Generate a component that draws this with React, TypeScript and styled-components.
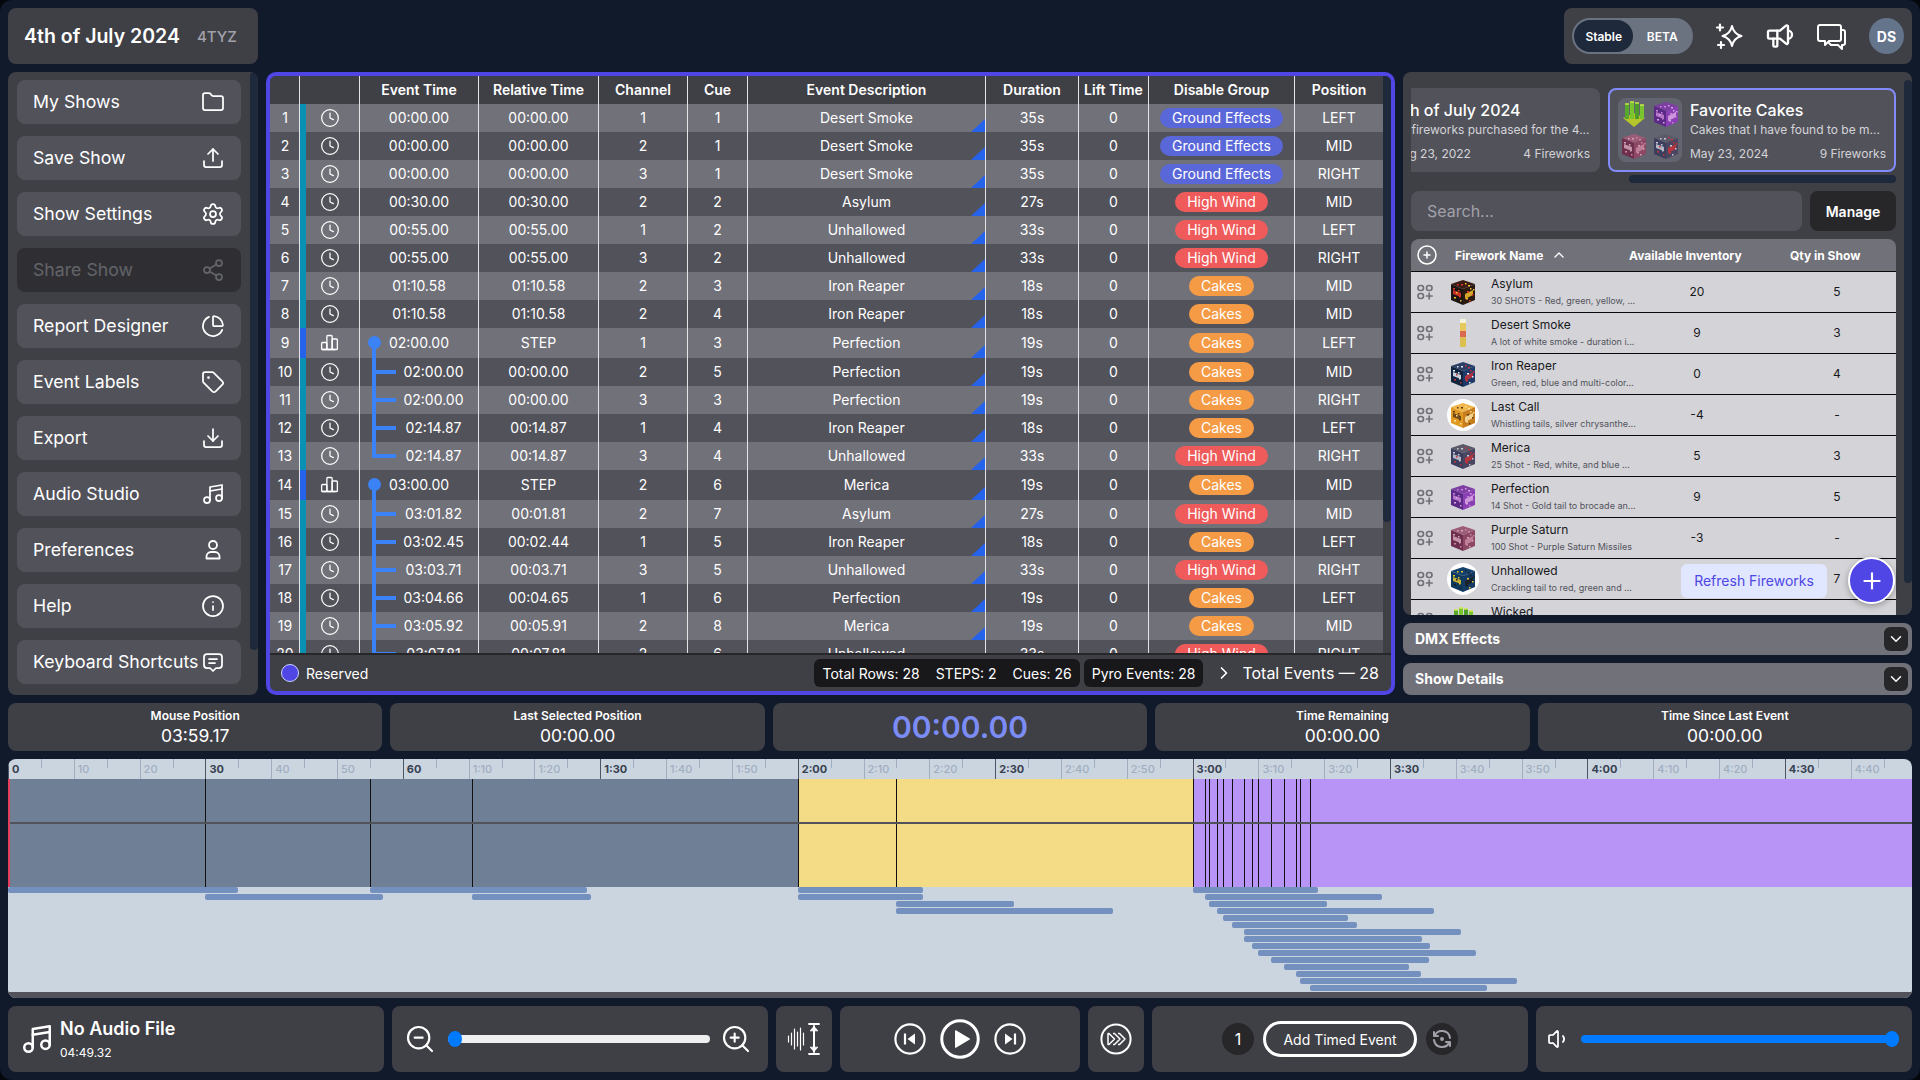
import React from "react";
import styled, { createGlobalStyle } from "styled-components";
import { Clock, Download, Folder, Info, Music4, PieChart, Plus, Settings, Share2, Tag, Upload, Volume1, ZoomIn, ZoomOut } from "lucide-react";
import { TbChartBar, TbChevronDown, TbChevronRight, TbChevronUp, TbCirclePlus, TbMessage2, TbRefreshDot, TbSpeakerphone } from "react-icons/tb";

const GlobalStyle = createGlobalStyle`
  html, body { margin: 0; padding: 0; background: #05070c; overflow: hidden; }
  * { box-sizing: border-box; }
  body { font-family: Inter, "Noto Sans", sans-serif; color: #fff; }
`;

const PX_PER_SEC = 1904 / 289.32;
const COLS = "30px 60px 119px 120px 89px 60px 238px 93px 70px 146px 88px";

/* ---------- shell ---------- */
const Page = styled.div`
  width: 1920px;
  height: 1080px;
  padding: 8px;
  background: #111a2b;
  border-radius: 12px;
  display: grid;
  grid-template-rows: 56px 623px 48px 239px 66px;
  gap: 8px;
`;
const TopBar = styled.div`
  display: flex;
  justify-content: space-between;
`;
const TitleCard = styled.div`
  width: 250px;
  background: #3f3f46;
  border-radius: 8px;
  display: flex;
  align-items: center;
  gap: 17px;
  padding: 0 16px;
  white-space: nowrap;
`;
const ShowName = styled.span`
  font-size: 19.5px;
  font-weight: 600;
`;
const ShowCode = styled.span`
  font-size: 15px;
  font-weight: 500;
  color: #a1a1aa;
`;
const UserCard = styled.div`
  width: 348px;
  background: #3f3f46;
  border-radius: 8px;
  display: flex;
  align-items: center;
  padding: 0 8px;
`;
const Toggle = styled.div`
  width: 121px;
  height: 36px;
  border-radius: 18px;
  background: #6b7280;
  display: flex;
  align-items: center;
  padding: 2px;
  font-size: 12px;
  font-weight: 600;
  margin-right: 14px;
`;
const ToggleOption = styled.span<{ $on?: boolean }>`
  width: ${(p) => (p.$on ? "60px" : "58px")};
  height: 32px;
  border-radius: 16px;
  background: ${(p) => (p.$on ? "#1e293b" : "transparent")};
  display: flex;
  align-items: center;
  justify-content: center;
`;
const TopIcons = styled.div`
  display: flex;
  align-items: center;
  gap: 20px;
  flex: 1;
  padding-left: 7px;
`;
const Avatar = styled.div`
  width: 35px;
  height: 36px;
  border-radius: 50%;
  background: #64748b;
  display: flex;
  align-items: center;
  justify-content: center;
  font-size: 14px;
  font-weight: 700;
`;
const Main = styled.div`
  display: grid;
  grid-template-columns: 250px 1129px 509px;
  gap: 8px;
  min-height: 0;
`;

/* ---------- sidebar ---------- */
const Sidebar = styled.nav`
  display: flex;
  background: #3f3f46;
  border-radius: 8px;
  overflow: hidden;
`;
const SideList = styled.div`
  flex: 1;
  display: flex;
  flex-direction: column;
  gap: 12px;
  padding: 8px 9px;
`;
const SideButton = styled.div<{ $off?: boolean }>`
  height: 44px;
  flex: none;
  border-radius: 8px;
  background: ${(p) => (p.$off ? "#2f2f33" : "#52525b")};
  color: ${(p) => (p.$off ? "#63646a" : "#fff")};
  display: flex;
  align-items: center;
  justify-content: space-between;
  padding: 0 16px 1px;
  font-size: 17.7px;
  white-space: nowrap;
`;
const SideThumb = styled.div`
  width: 8px;
  height: 578px;
  border-radius: 4px;
  background: #1e293b;
`;

/* ---------- event table ---------- */
const TablePanel = styled.section`
  border: 4px solid #4f46e5;
  border-radius: 10px;
  background: #3f3f46;
  overflow: hidden;
  display: flex;
  flex-direction: column;
`;
const TableBody = styled.div`
  height: 577px;
  display: flex;
`;
const TableView = styled.div`
  width: 1113px;
  overflow: hidden;
`;
const TableThumb = styled.div`
  width: 8px;
  height: 446px;
  border-radius: 0 0 4px 4px;
  background: #1e293b;
`;
const HeadRow = styled.div`
  display: grid;
  grid-template-columns: ${COLS};
  height: 28px;
  background: #3f3f46;
  font-size: 14px;
  font-weight: 600;
`;
const DataRow = styled.div<{ $light: boolean; $step: boolean }>`
  display: grid;
  grid-template-columns: ${COLS};
  height: ${(p) => (p.$step ? "30px" : "28px")};
  background: ${(p) => (p.$light ? "#71717a" : "#52525b")};
  font-size: 14px;
`;
const Cell = styled.div`
  display: flex;
  align-items: center;
  justify-content: center;
  padding-bottom: 1px;
  border-right: 1px solid #e4e4e7;
  white-space: nowrap;
  min-width: 0;
`;
const PlainCell = styled(Cell)`
  border-right: none;
`;
const NumCell = styled(Cell)`
  padding-left: 1px;
`;
const TypeCell = styled(Cell)<{ $step: boolean }>`
  border-left: 6px solid ${(p) => (p.$step ? "#2563eb" : "#0891b2")};
  padding-right: 6px;
`;
const TimeCell = styled(Cell)<{ $child: boolean }>`
  position: relative;
  padding-left: ${(p) => (p.$child ? "29px" : "0")};
`;
const DescCell = styled(Cell)`
  position: relative;
  &::after {
    content: "";
    position: absolute;
    right: 0;
    bottom: 0;
    width: 14px;
    height: 13px;
    background: #2563eb;
    clip-path: polygon(100% 0, 100% 100%, 0 100%);
  }
`;
const StepDot = styled.i`
  position: absolute;
  left: 8px;
  top: 8px;
  width: 13px;
  height: 13px;
  border-radius: 50%;
  background: #3b82f6;
  &::after {
    content: "";
    position: absolute;
    left: 4px;
    top: 6px;
    width: 4px;
    height: 18px;
    background: #3b82f6;
  }
`;
const TreeBranch = styled.i<{ $last: boolean }>`
  position: absolute;
  left: 12px;
  top: 0;
  width: 4px;
  height: ${(p) => (p.$last ? "16px" : "100%")};
  background: #3b82f6;
  &::after {
    content: "";
    position: absolute;
    left: 0;
    top: 12px;
    width: 24px;
    height: 4px;
    background: #3b82f6;
  }
`;
const GroupPill = styled.span<{ $color: string }>`
  height: 20px;
  padding: 0 12px 1px;
  border-radius: 10px;
  background: ${(p) => p.$color};
  display: flex;
  align-items: center;
`;
const TableFooter = styled.div`
  flex: 1;
  display: flex;
  align-items: center;
  padding: 0 12px 0 11px;
  border-top: 2px solid #27272a;
  font-size: 14px;
`;
const LegendDot = styled.span`
  width: 18px;
  height: 18px;
  border-radius: 50%;
  background: #4f46e5;
  border: 1px solid #c7d2fe;
  margin-right: 7px;
`;
const Totals = styled.div`
  margin-left: auto;
  display: flex;
  align-items: center;
  gap: 4px;
`;
const TotalPill = styled.div`
  height: 28px;
  padding: 0 8px;
  border-radius: 6px;
  background: #18181b;
  display: flex;
  align-items: center;
  gap: 16px;
`;
const ExpandTotals = styled.span`
  display: flex;
  margin-left: 7px;
`;
const TotalEvents = styled.span`
  font-size: 16px;
  margin-left: 4px;
`;

/* ---------- inventory ---------- */
const RightColumn = styled.div`
  display: flex;
  flex-direction: column;
  gap: 8px;
  min-height: 0;
`;
const Inventory = styled.section`
  position: relative;
  flex: 1;
  min-height: 0;
  background: #3f3f46;
  border-radius: 8px;
  overflow: hidden;
  padding: 16px 16px 0 8px;
  display: flex;
  flex-direction: column;
`;
const InvScroll = styled.div`
  position: absolute;
  top: 8px;
  right: 0;
  width: 8px;
  height: 503px;
  border-radius: 4px;
  background: #1e293b;
`;
const Carousel = styled.div`
  display: flex;
  justify-content: flex-end;
  gap: 8px;
  height: 84px;
  flex: none;
  overflow: hidden;
`;
const ListCard = styled.div<{ $active?: boolean }>`
  flex: none;
  width: 288px;
  height: 84px;
  padding: 8px;
  border-radius: 8px;
  border: 2px solid ${(p) => (p.$active ? "#818cf8" : "#52525b")};
  background: #52525b;
  display: grid;
  grid-template-columns: 64px 1fr;
  gap: 8px;
`;
const ArtGrid = styled.div`
  display: grid;
  grid-template-columns: 32px 32px;
  border-radius: 8px;
  background: #62656f;
`;
const CardText = styled.div`
  min-width: 0;
  padding-top: 2px;
  display: flex;
  flex-direction: column;
`;
const CardTitle = styled.div`
  font-size: 16px;
  font-weight: 500;
  line-height: 20px;
`;
const CardDesc = styled.div`
  font-size: 12px;
  line-height: 16px;
  margin-top: 2px;
  color: #d4d4d8;
  white-space: nowrap;
`;
const CardMeta = styled.div`
  font-size: 12px;
  line-height: 16px;
  margin-top: 8px;
  color: #d4d4d8;
  display: flex;
  justify-content: space-between;
`;
const HScroll = styled.div`
  flex: none;
  height: 8px;
  margin: 3px 0 8px 218px;
  border-radius: 4px;
  background: #1e293b;
`;
const SearchRow = styled.div`
  display: flex;
  gap: 8px;
  flex: none;
  height: 40px;
  margin-bottom: 8px;
`;
const SearchInput = styled.input`
  flex: 1;
  min-width: 0;
  height: 40px;
  border: none;
  outline: none;
  border-radius: 8px;
  background: #52525b;
  padding: 0 16px;
  font: 400 16px Inter, sans-serif;
  color: #fff;
  &::placeholder {
    color: #a1a1aa;
    opacity: 1;
  }
`;
const ManageButton = styled.div`
  width: 86px;
  border-radius: 8px;
  background: #27272a;
  display: flex;
  align-items: center;
  justify-content: center;
  font-size: 14px;
  font-weight: 600;
`;
const FireworkHead = styled.div`
  flex: none;
  height: 32px;
  background: #71717a;
  border-radius: 8px 8px 0 0;
  display: grid;
  grid-template-columns: 44px 174px 161px 1fr;
  align-items: center;
  font-size: 12px;
  font-weight: 700;
`;
const HeadAdd = styled.div`
  padding-left: 4px;
  display: flex;
`;
const HeadName = styled.div`
  display: flex;
  align-items: center;
  gap: 8px;
`;
const FireworkRow = styled.div`
  flex: none;
  height: 41px;
  background: #d4d4d8;
  border-top: 1px solid #09090b;
  color: #18181b;
  display: grid;
  grid-template-columns: 36px 44px 166px 80px 1fr;
  align-items: center;
`;
const DragCol = styled.div`
  padding-left: 6px;
  display: flex;
`;
const ThumbBox = styled.div<{ $round?: boolean }>`
  width: 32px;
  height: 32px;
  border-radius: 50%;
  background: ${(p) => (p.$round ? "#fff" : "transparent")};
`;
const NameBox = styled.div`
  min-width: 0;
  padding-bottom: 2px;
`;
const FireworkName = styled.div`
  font-size: 12px;
  line-height: 16px;
`;
const FireworkDesc = styled.div`
  font-size: 9px;
  line-height: 12px;
  min-height: 12px;
  margin-top: 3px;
  color: #52525b;
  white-space: nowrap;
`;
const Avail = styled.div`
  font-size: 12px;
  text-align: center;
  padding-bottom: 1px;
`;
const Qty = styled(Avail)`
  padding-left: 41px;
`;
const Floating = styled.div`
  position: absolute;
  right: 17px;
  bottom: 11px;
  display: flex;
  align-items: center;
  gap: 21px;
`;
const RefreshButton = styled.div`
  width: 146px;
  height: 34px;
  border-radius: 6px;
  background: #e0e7ff;
  color: #4f46e5;
  font-size: 14px;
  display: flex;
  align-items: center;
  justify-content: center;
`;
const Fab = styled.div`
  width: 47px;
  height: 47px;
  border-radius: 50%;
  background: #4f46e5;
  border: 2px solid #fff;
  box-shadow: 0 2px 6px rgba(0, 0, 0, 0.3);
  display: flex;
  align-items: center;
  justify-content: center;
`;
const Accordion = styled.div`
  flex: none;
  height: 32px;
  border-radius: 8px;
  background: #71717a;
  padding: 0 4px 1px 12px;
  display: flex;
  align-items: center;
  justify-content: space-between;
  font-size: 14px;
  font-weight: 700;
`;
const AccordionToggle = styled.span`
  width: 24px;
  height: 24px;
  border-radius: 6px;
  background: #27272a;
  display: flex;
  align-items: center;
  justify-content: center;
`;

/* ---------- stats ---------- */
const StatRow = styled.div`
  display: grid;
  grid-template-columns: repeat(5, 1fr);
  gap: 8px;
`;
const StatCard = styled.div`
  background: #3f3f46;
  border-radius: 8px;
  display: flex;
  flex-direction: column;
  align-items: center;
  justify-content: center;
`;
const StatLabel = styled.div`
  font-size: 12px;
  font-weight: 600;
  line-height: 16px;
`;
const StatValue = styled.div`
  font-size: 17.500px;
  line-height: 22px;
  margin-top: 1px;
`;
const ClockValue = styled.div`
  font-size: 30px;
  font-weight: 600;
  color: #7c8cf5;
`;

/* ---------- timeline ---------- */
const Timeline = styled.section`
  border-radius: 8px;
  overflow: hidden;
  display: flex;
  flex-direction: column;
  background: #cbd5e0;
`;
const Ruler = styled.div`
  position: relative;
  height: 20px;
  flex: none;
`;
const Tick = styled.div<{ $major: boolean; $short: boolean }>`
  position: absolute;
  top: 0;
  height: ${(p) => (p.$short ? "9px" : "20px")};
  border-left: 1px solid ${(p) => (p.$major ? "#4b5563" : "#a0aec0")};
  padding: 3px 0 0 3px;
  font-size: 11px;
  line-height: 14px;
  font-weight: ${(p) => (p.$major ? 700 : 500)};
  color: ${(p) => (p.$major ? "#374151" : "#a0aec0")};
  white-space: nowrap;
`;
const Wave = styled.div`
  position: relative;
  height: 108px;
  flex: none;
`;
const Segment = styled.div<{ $color: string }>`
  position: absolute;
  top: 0;
  bottom: 0;
  background: ${(p) => p.$color};
`;
const MidLine = styled.div`
  position: absolute;
  left: 0;
  right: 0;
  top: 43px;
  height: 2px;
  background: #52525b;
`;
const EventLine = styled.div`
  position: absolute;
  top: 0;
  bottom: 0;
  width: 1px;
  background: #111;
`;
const Playhead = styled.div`
  position: absolute;
  top: 0;
  bottom: 0;
  left: 0;
  width: 2px;
  background: #e53e5c;
`;
const Tracks = styled.div`
  position: relative;
  flex: 1;
`;
const TrackBar = styled.div`
  position: absolute;
  height: 6px;
  border-radius: 2px;
  background: #7490bf;
`;
const TimelineScroll = styled.div`
  flex: none;
  height: 6px;
  background: #52525b;
`;

/* ---------- bottom controls ---------- */
const Controls = styled.div`
  display: grid;
  grid-template-columns: 376px 376px 56px 240px 56px 376px 376px;
  gap: 8px;
`;
const Panel = styled.div`
  background: #3f3f46;
  border-radius: 8px;
  display: flex;
  align-items: center;
`;
const AudioPanel = styled(Panel)`
  padding-left: 12px;
  gap: 6px;
`;
const AudioName = styled.div`
  font-size: 18px;
  font-weight: 600;
  line-height: 22px;
`;
const AudioTime = styled.div`
  font-size: 12px;
  line-height: 16px;
  margin-top: 5px;
`;
const ZoomPanel = styled(Panel)`
  padding: 0 16px 0 12px;
`;
const SliderTrack = styled.div<{ $fill: string }>`
  position: relative;
  flex: 1;
  height: 8px;
  border-radius: 4px;
  background: ${(p) => p.$fill};
`;
const SliderThumb = styled.span<{ $end?: boolean }>`
  position: absolute;
  top: -4px;
  ${(p) => (p.$end ? "right: 0;" : "left: 0;")}
  width: 14px;
  height: 16px;
  border-radius: 50%;
  background: #007bff;
`;
const ZoomTrackWrap = styled.div`
  flex: 1;
  display: flex;
  margin: 0 10px 0 12px;
`;
const CenterPanel = styled(Panel)`
  justify-content: center;
`;
const TransportPanel = styled(CenterPanel)`
  gap: 14px;
`;
const AddPanel = styled(CenterPanel)`
  gap: 9px;
`;
const RoundBadge = styled.div`
  width: 32px;
  height: 32px;
  border-radius: 50%;
  background: #27272a;
  display: flex;
  align-items: center;
  justify-content: center;
  font-size: 16px;
`;
const AddButton = styled.div`
  width: 154px;
  height: 36px;
  border: 3px solid #fff;
  border-radius: 18px;
  display: flex;
  align-items: center;
  justify-content: center;
  font-size: 14px;
`;
const VolumePanel = styled(Panel)`
  padding: 0 13px 0 11px;
  gap: 10px;
`;

/* ---------- drawings ---------- */
const DragIcon = () => (
  <svg width="16" height="16" viewBox="0 0 16 16" fill="none" stroke="#71717a" strokeWidth="1.7" strokeLinecap="round">
    <rect x="1" y="1.5" width="5.5" height="5" rx="2.4" />
    <rect x="9.5" y="1.5" width="5.5" height="5" rx="2.4" />
    <rect x="1" y="9.5" width="5.5" height="5" rx="2.4" />
    <path d="M12.2 9.2v5.6M9.500 12h5.600" />
  </svg>
);

const SparkIcon = () => (
  <svg width="30" height="30" viewBox="0 0 30 30" fill="none" stroke="#fff" strokeWidth="2" strokeLinejoin="round">
    <path d="M18 5c1.200 5.500 4 8.600 9.500 10-5.500 1.400-8.300 4.500-9.500 10-1.200-5.500-4-8.600-9.500-10 5.500-1.400 8.300-4.500 9.500-10z" />
    <path d="M6 3.500v6M3 6.500h6M7 21v6M4 24h6" strokeWidth="2.200" strokeLinecap="round" />
  </svg>
);

const ChatIcon = () => (
  <svg width="30" height="30" viewBox="0 0 30 30" fill="none" stroke="#fff" strokeWidth="2" strokeLinejoin="round" strokeLinecap="round">
    <path d="M4 4h19a2 2 0 0 1 2 2v12a2 2 0 0 1-2 2H13l-4 4v-4H4a2 2 0 0 1-2-2V6a2 2 0 0 1 2-2z" />
    <path d="M25 9h2a2 2 0 0 1 2 2v11a2 2 0 0 1-2 2h-1v4l-4-4h-7l-2-2" />
  </svg>
);

const PersonIcon = () => (
  <svg width="24" height="24" viewBox="0 0 24 24" fill="none" stroke="#fff" strokeWidth="1.8" strokeLinejoin="round">
    <circle cx="12" cy="7" r="4" />
    <path d="M5.500 20.500v-2a4.500 4.500 0 0 1 4.500-4.500h4a4.500 4.500 0 0 1 4.500 4.500v2z" />
  </svg>
);

const WaveIcon = () => (
  <svg width="34" height="34" viewBox="0 0 34 34" fill="none" stroke="#fff" strokeLinecap="round">
    <path d="M1.500 14v6M4.500 11v12M7.500 7v20M10.500 10v14M13.500 6v22M16.500 11v12" strokeWidth="1.200" />
    <path d="M22 2h10M22 32h10" strokeWidth="1.800" />
    <path d="M27 4v26" strokeWidth="2" />
    <path d="M23.500 8.500 27 4.500l3.500 4zM23.500 25.500 27 29.500l3.500-4z" fill="#fff" strokeWidth="1" />
  </svg>
);

const TransportIcon = ({ size, kind }: { size: number; kind: "back" | "play" | "next" }) => (
  <svg width={size} height={size} viewBox="0 0 32 32" fill="none" stroke="#fff" strokeWidth={kind === "play" ? 2.4 : 2.2}>
    <circle cx="16" cy="16" r="14.600" />
    {kind === "play" && <polygon points="12.500,9.500 23.500,16 12.500,22.500" fill="#fff" stroke="#fff" strokeWidth="1" strokeLinejoin="round" />}
    {kind === "back" && (
      <>
        <path d="M11 10.500v11" />
        <polygon points="21,10.500 21,21.500 13.500,16" fill="#fff" stroke="none" />
      </>
    )}
    {kind === "next" && (
      <>
        <path d="M21 10.500v11" />
        <polygon points="11,10.500 11,21.500 18.500,16" fill="#fff" stroke="none" />
      </>
    )}
  </svg>
);

const SpeedIcon = () => (
  <svg width="32" height="32" viewBox="0 0 32 32" fill="none" stroke="#fff" strokeWidth="2">
    <circle cx="16" cy="16" r="14.600" />
    <path d="M8 10.500v11h1l5.500-5.500L9 10.500zM13 10.500h1.500L20 16l-5.500 5.500H13M18 10.500h1.500L25 16l-5.500 5.500H18" strokeWidth="1.500" strokeLinejoin="round" />
  </svg>
);

type BoxColors = { top: string; left: string; right: string; a: string; b: string };

// flecks that break up the flat faces, the reference thumbs are small product photos
const FLECKS = [
  [6, 12], [9, 16], [12, 20], [7, 21], [11, 14], [13, 24], [20, 15], [23, 12], [25, 18], [19, 22], [22, 24], [26, 13], [14, 8], [18, 7], [10, 8], [21, 9],
];

const BoxArt = ({ top, left, right, a, b }: BoxColors) => (
  <svg width="32" height="32" viewBox="0 0 32 32">
    <polygon points="16,4 28,8 16,13 4,8" fill={top} />
    <polygon points="4,8 16,13 16,29 4,24" fill={left} />
    <polygon points="16,13 28,8 28,24 16,29" fill={right} />
    <polygon points="6,14 14,17 14,21 6,18" fill={a} opacity="0.85" />
    <polygon points="18,18 26,14 26,19 18,23" fill={b} opacity="0.85" />
    {FLECKS.map(([x, y], i) => (
      <rect key={i} x={x} y={y} width={i % 3 === 0 ? 2 : 1.5} height="1.500" fill={i % 2 === 0 ? a : b} />
    ))}
  </svg>
);

const TubeArt = () => (
  <svg width="32" height="32" viewBox="0 0 32 32">
    <rect x="13" y="2" width="6" height="4" rx="1" fill="#f5f5dc" />
    <rect x="13" y="6" width="6" height="8" fill="#e8c85a" />
    <rect x="13" y="14" width="6" height="6" fill="#d9694f" />
    <rect x="13" y="20" width="6" height="10" rx="1" fill="#dcc04f" />
  </svg>
);

const GreenArt = () => (
  <svg width="32" height="32" viewBox="0 0 32 32">
    <polygon points="5,20 16,15 27,20 16,29" fill="#b5c52a" />
    <rect x="7" y="6" width="4" height="15" fill="#57a82b" />
    <rect x="12" y="4" width="4" height="17" fill="#7ac52e" />
    <rect x="17" y="5" width="4" height="16" fill="#4d9c2a" />
    <rect x="22" y="7" width="4" height="14" fill="#7ac52e" />
    <path d="M7 6h4M12 4h4M17 5h4M22 7h4" stroke="#c9e84a" strokeWidth="1.500" />
  </svg>
);

const ART: Record<string, BoxColors> = {
  asylum: { top: "#3a1c14", left: "#1d1512", right: "#2a1a12", a: "#e8362a", b: "#f2c12e" },
  iron: { top: "#2c3e66", left: "#12253f", right: "#1d3a6b", a: "#e9eef5", b: "#c8333a" },
  lastCall: { top: "#f0b64a", left: "#e39a22", right: "#c77d1b", a: "#5b3a17", b: "#f7e2a4" },
  merica: { top: "#5c5a6a", left: "#3b3f5d", right: "#4a4560", a: "#c9c9d6", b: "#c8333a" },
  perfection: { top: "#7d3fa3", left: "#5a2a86", right: "#8a3fb4", a: "#c884d6", b: "#d9a6e2" },
  saturn: { top: "#9d5d78", left: "#6e2f4e", right: "#8d4865", a: "#d3a7b8", b: "#c98aa2" },
  unhallowed: { top: "#14406e", left: "#0e3a5e", right: "#123a63", a: "#e8c52c", b: "#1d1d1d" },
};

const Art = ({ name }: { name: string }) => {
  if (name === "tube") return <TubeArt />;
  if (name === "green") return <GreenArt />;
  return <BoxArt {...ART[name]} />;
};

/* ---------- data ---------- */
const NAV = [
  { label: "My Shows", icon: <Folder size={24} strokeWidth={1.75} /> },
  { label: "Save Show", icon: <Upload size={24} strokeWidth={1.75} /> },
  { label: "Show Settings", icon: <Settings size={24} strokeWidth={1.75} /> },
  { label: "Share Show", icon: <Share2 size={24} strokeWidth={1.75} />, off: true },
  { label: "Report Designer", icon: <PieChart size={24} strokeWidth={1.75} /> },
  { label: "Event Labels", icon: <Tag size={24} strokeWidth={1.75} /> },
  { label: "Export", icon: <Download size={24} strokeWidth={1.75} /> },
  { label: "Audio Studio", icon: <Music4 size={24} strokeWidth={1.75} /> },
  { label: "Preferences", icon: <PersonIcon /> },
  { label: "Help", icon: <Info size={24} strokeWidth={1.75} /> },
  { label: "Keyboard Shortcuts", icon: <TbMessage2 size={24} strokeWidth={1.75} /> },
];

const GROUP_COLOR: Record<string, string> = {
  "Ground Effects": "#5a67d8",
  "High Wind": "#ef5b5b",
  Cakes: "#f59b45",
};

type Tree = "none" | "step" | "child" | "last";
type EventRow = [string, string, number, number, string, string, string, string, Tree];

const EVENTS: EventRow[] = [
  ["00:00.00", "00:00.00", 1, 1, "Desert Smoke", "35s", "Ground Effects", "LEFT", "none"],
  ["00:00.00", "00:00.00", 2, 1, "Desert Smoke", "35s", "Ground Effects", "MID", "none"],
  ["00:00.00", "00:00.00", 3, 1, "Desert Smoke", "35s", "Ground Effects", "RIGHT", "none"],
  ["00:30.00", "00:30.00", 2, 2, "Asylum", "27s", "High Wind", "MID", "none"],
  ["00:55.00", "00:55.00", 1, 2, "Unhallowed", "33s", "High Wind", "LEFT", "none"],
  ["00:55.00", "00:55.00", 3, 2, "Unhallowed", "33s", "High Wind", "RIGHT", "none"],
  ["01:10.58", "01:10.58", 2, 3, "Iron Reaper", "18s", "Cakes", "MID", "none"],
  ["01:10.58", "01:10.58", 2, 4, "Iron Reaper", "18s", "Cakes", "MID", "none"],
  ["02:00.00", "STEP", 1, 3, "Perfection", "19s", "Cakes", "LEFT", "step"],
  ["02:00.00", "00:00.00", 2, 5, "Perfection", "19s", "Cakes", "MID", "child"],
  ["02:00.00", "00:00.00", 3, 3, "Perfection", "19s", "Cakes", "RIGHT", "child"],
  ["02:14.87", "00:14.87", 1, 4, "Iron Reaper", "18s", "Cakes", "LEFT", "child"],
  ["02:14.87", "00:14.87", 3, 4, "Unhallowed", "33s", "High Wind", "RIGHT", "last"],
  ["03:00.00", "STEP", 2, 6, "Merica", "19s", "Cakes", "MID", "step"],
  ["03:01.82", "00:01.81", 2, 7, "Asylum", "27s", "High Wind", "MID", "child"],
  ["03:02.45", "00:02.44", 1, 5, "Iron Reaper", "18s", "Cakes", "LEFT", "child"],
  ["03:03.71", "00:03.71", 3, 5, "Unhallowed", "33s", "High Wind", "RIGHT", "child"],
  ["03:04.66", "00:04.65", 1, 6, "Perfection", "19s", "Cakes", "LEFT", "child"],
  ["03:05.92", "00:05.91", 2, 8, "Merica", "19s", "Cakes", "MID", "child"],
  ["03:07.81", "00:07.81", 2, 6, "Unhallowed", "33s", "High Wind", "RIGHT", "child"],
];

const FIREWORKS = [
  { name: "Asylum", desc: "30 SHOTS - Red, green, yellow, ...", avail: "20", qty: "5", art: "asylum" },
  { name: "Desert Smoke", desc: "A lot of white smoke - duration i...", avail: "9", qty: "3", art: "tube" },
  { name: "Iron Reaper", desc: "Green, red, blue and multi-color...", avail: "0", qty: "4", art: "iron" },
  { name: "Last Call", desc: "Whistling tails, silver chrysanthe...", avail: "-4", qty: "-", art: "lastCall", round: true },
  { name: "Merica", desc: "25 Shot - Red, white, and blue ...", avail: "5", qty: "3", art: "merica" },
  { name: "Perfection", desc: "14 Shot - Gold tail to brocade an...", avail: "9", qty: "5", art: "perfection" },
  { name: "Purple Saturn", desc: "100 Shot - Purple Saturn Missiles", avail: "-3", qty: "-", art: "saturn" },
  { name: "Unhallowed", desc: "Crackling tail to red, green and ...", avail: "", qty: "7", art: "unhallowed", round: true },
  { name: "Wicked", desc: "", avail: "", qty: "", art: "green" },
];

const STATS = [
  ["Mouse Position", "03:59.17"],
  ["Last Selected Position", "00:00.00"],
  null,
  ["Time Remaining", "00:00.00"],
  ["Time Since Last Event", "00:00.00"],
];

// [start seconds, duration, lane]
const BARS: [number, number, number][] = [
  [0, 35, 0], [30, 27, 1], [55, 33, 0], [70.58, 18, 1], [120, 19, 0], [120, 19, 1], [134.87, 18, 2], [134.87, 33, 3],
  [180, 19, 0], [181.82, 27, 1], [182.45, 18, 2], [183.71, 33, 3], [184.66, 19, 4], [185.92, 19, 5], [187.81, 33, 6],
  [187.81, 27, 7], [189.1, 27, 8], [190, 33, 9], [191.9, 24, 10], [193.9, 19, 11], [195.7, 19, 12], [196.3, 33, 13], [197.8, 27, 14],
];

const LINE_TIMES = Array.from(new Set(BARS.map((b) => b[0])));

const SEGMENTS = [
  { from: 0, to: 120, color: "#6f7f96" },
  { from: 120, to: 180, color: "#f4dc87" },
  { from: 180, to: 289.32, color: "#b794f6" },
];

const tickLabel = (s: number) => {
  if (s <= 60) return String(s);
  const m = Math.floor(s / 60);
  const r = s % 60;
  return `${m}:${r < 10 ? "0" : ""}${r}`;
};
const TICKS = Array.from({ length: 58 }, (_, i) => i * 5);

const ShowCard = ({ title, desc, date, count, arts, active }: { title: string; desc: string; date: string; count: string; arts: string[]; active?: boolean }) => (
  <ListCard $active={active}>
    <ArtGrid>
      {arts.map((a, i) => (
        <Art key={i} name={a} />
      ))}
    </ArtGrid>
    <CardText>
      <CardTitle>{title}</CardTitle>
      <CardDesc>{desc}</CardDesc>
      <CardMeta>
        <span>{date}</span>
        <span>{count}</span>
      </CardMeta>
    </CardText>
  </ListCard>
);

export default function App() {
  return (
    <Page>
      <GlobalStyle />
      <TopBar>
        <TitleCard>
          <ShowName>4th of July 2024</ShowName>
          <ShowCode>4TYZ</ShowCode>
        </TitleCard>
        <UserCard>
          <Toggle>
            <ToggleOption $on>Stable</ToggleOption>
            <ToggleOption>BETA</ToggleOption>
          </Toggle>
          <TopIcons>
            <SparkIcon />
            <TbSpeakerphone size={32} strokeWidth={1.75} />
            <ChatIcon />
          </TopIcons>
          <Avatar>DS</Avatar>
        </UserCard>
      </TopBar>

      <Main>
        <Sidebar>
          <SideList>
            {NAV.map((n) => (
              <SideButton key={n.label} $off={n.off}>
                {n.label}
                {n.icon}
              </SideButton>
            ))}
          </SideList>
          <SideThumb />
        </Sidebar>

        <TablePanel>
          <TableBody>
            <TableView>
              <HeadRow>
                <Cell />
                <Cell />
                <Cell>Event Time</Cell>
                <Cell>Relative Time</Cell>
                <Cell>Channel</Cell>
                <Cell>Cue</Cell>
                <Cell>Event Description</Cell>
                <Cell>Duration</Cell>
                <Cell>Lift Time</Cell>
                <Cell>Disable Group</Cell>
                <PlainCell>Position</PlainCell>
              </HeadRow>
              {EVENTS.map((e, i) => {
                const tree = e[8];
                const step = tree === "step";
                const child = tree === "child" || tree === "last";
                return (
                  <DataRow key={i} $light={i % 2 === 0} $step={step}>
                    <NumCell>{i + 1}</NumCell>
                    <TypeCell $step={step}>{step ? <TbChartBar size={21} strokeWidth={1.5} /> : <Clock size={20} strokeWidth={1.5} />}</TypeCell>
                    <TimeCell $child={child}>
                      {step && <StepDot />}
                      {child && <TreeBranch $last={tree === "last"} />}
                      {e[0]}
                    </TimeCell>
                    <Cell>{e[1]}</Cell>
                    <Cell>{e[2]}</Cell>
                    <Cell>{e[3]}</Cell>
                    <DescCell>{e[4]}</DescCell>
                    <Cell>{e[5]}</Cell>
                    <Cell>0</Cell>
                    <Cell>
                      <GroupPill $color={GROUP_COLOR[e[6]]}>{e[6]}</GroupPill>
                    </Cell>
                    <PlainCell>{e[7]}</PlainCell>
                  </DataRow>
                );
              })}
            </TableView>
            <TableThumb />
          </TableBody>
          <TableFooter>
            <LegendDot />
            Reserved
            <Totals>
              <TotalPill>
                <span>Total Rows: 28</span>
                <span>STEPS: 2</span>
                <span>Cues: 26</span>
              </TotalPill>
              <TotalPill>Pyro Events: 28</TotalPill>
              <ExpandTotals>
                <TbChevronRight size={20} />
              </ExpandTotals>
              <TotalEvents>Total Events — 28</TotalEvents>
            </Totals>
          </TableFooter>
        </TablePanel>

        <RightColumn>
          <Inventory>
            <Carousel>
              <ShowCard title="4th of July 2024" desc="All fireworks purchased for the 4..." date="Aug 23, 2022" count="4 Fireworks" arts={["perfection", "iron", "merica", "asylum"]} />
              <ShowCard active title="Favorite Cakes" desc="Cakes that I have found to be m..." date="May 23, 2024" count="9 Fireworks" arts={["green", "perfection", "saturn", "merica"]} />
            </Carousel>
            <HScroll />
            <SearchRow>
              <SearchInput placeholder="Search..." readOnly />
              <ManageButton>Manage</ManageButton>
            </SearchRow>
            <FireworkHead>
              <HeadAdd>
                <TbCirclePlus size={24} strokeWidth={1.5} />
              </HeadAdd>
              <HeadName>
                Firework Name <TbChevronUp size={16} />
              </HeadName>
              <span>Available Inventory</span>
              <span>Qty in Show</span>
            </FireworkHead>
            {FIREWORKS.map((f) => (
              <FireworkRow key={f.name}>
                <DragCol>
                  <DragIcon />
                </DragCol>
                <ThumbBox $round={f.round}>
                  <Art name={f.art} />
                </ThumbBox>
                <NameBox>
                  <FireworkName>{f.name}</FireworkName>
                  <FireworkDesc>{f.desc}</FireworkDesc>
                </NameBox>
                <Avail>{f.avail}</Avail>
                <Qty>{f.qty}</Qty>
              </FireworkRow>
            ))}
            <InvScroll />
            <Floating>
              <RefreshButton>Refresh Fireworks</RefreshButton>
              <Fab>
                <Plus size={26} strokeWidth={2} />
              </Fab>
            </Floating>
          </Inventory>
          <Accordion>
            DMX Effects
            <AccordionToggle>
              <TbChevronDown size={18} />
            </AccordionToggle>
          </Accordion>
          <Accordion>
            Show Details
            <AccordionToggle>
              <TbChevronDown size={18} />
            </AccordionToggle>
          </Accordion>
        </RightColumn>
      </Main>

      <StatRow>
        {STATS.map((s, i) =>
          s ? (
            <StatCard key={i}>
              <StatLabel>{s[0]}</StatLabel>
              <StatValue>{s[1]}</StatValue>
            </StatCard>
          ) : (
            <StatCard key={i}>
              <ClockValue>00:00.00</ClockValue>
            </StatCard>
          )
        )}
      </StatRow>

      <Timeline>
        <Ruler>
          {TICKS.map((s) => {
            const short = s % 10 !== 0;
            return (
              <Tick key={s} $major={s % 30 === 0} $short={short} style={{ left: s * PX_PER_SEC }}>
                {short ? "" : tickLabel(s)}
              </Tick>
            );
          })}
        </Ruler>
        <Wave>
          {SEGMENTS.map((g) => (
            <Segment key={g.from} $color={g.color} style={{ left: g.from * PX_PER_SEC, width: (g.to - g.from) * PX_PER_SEC }} />
          ))}
          {LINE_TIMES.map((t) => (
            <EventLine key={t} style={{ left: t * PX_PER_SEC }} />
          ))}
          <MidLine />
          <Playhead />
        </Wave>
        <Tracks>
          {BARS.map(([start, dur, lane], i) => (
            <TrackBar key={i} style={{ left: start * PX_PER_SEC, width: dur * PX_PER_SEC, top: lane * 7 }} />
          ))}
        </Tracks>
        <TimelineScroll />
      </Timeline>

      <Controls>
        <AudioPanel>
          <Music4 size={34} strokeWidth={1.75} />
          <div>
            <AudioName>No Audio File</AudioName>
            <AudioTime>04:49.32</AudioTime>
          </div>
        </AudioPanel>
        <ZoomPanel>
          <ZoomOut size={32} strokeWidth={1.6} />
          <ZoomTrackWrap>
            <SliderTrack $fill="#efefef">
              <SliderThumb />
            </SliderTrack>
          </ZoomTrackWrap>
          <ZoomIn size={32} strokeWidth={1.6} />
        </ZoomPanel>
        <CenterPanel>
          <WaveIcon />
        </CenterPanel>
        <TransportPanel>
          <TransportIcon size={32} kind="back" />
          <TransportIcon size={40} kind="play" />
          <TransportIcon size={32} kind="next" />
        </TransportPanel>
        <CenterPanel>
          <SpeedIcon />
        </CenterPanel>
        <AddPanel>
          <RoundBadge>1</RoundBadge>
          <AddButton>Add Timed Event</AddButton>
          <RoundBadge>
            <TbRefreshDot size={24} color="#a1a1aa" />
          </RoundBadge>
        </AddPanel>
        <VolumePanel>
          <Volume1 size={24} strokeWidth={1.75} />
          <SliderTrack $fill="#007bff">
            <SliderThumb $end />
          </SliderTrack>
        </VolumePanel>
      </Controls>
    </Page>
  );
}
